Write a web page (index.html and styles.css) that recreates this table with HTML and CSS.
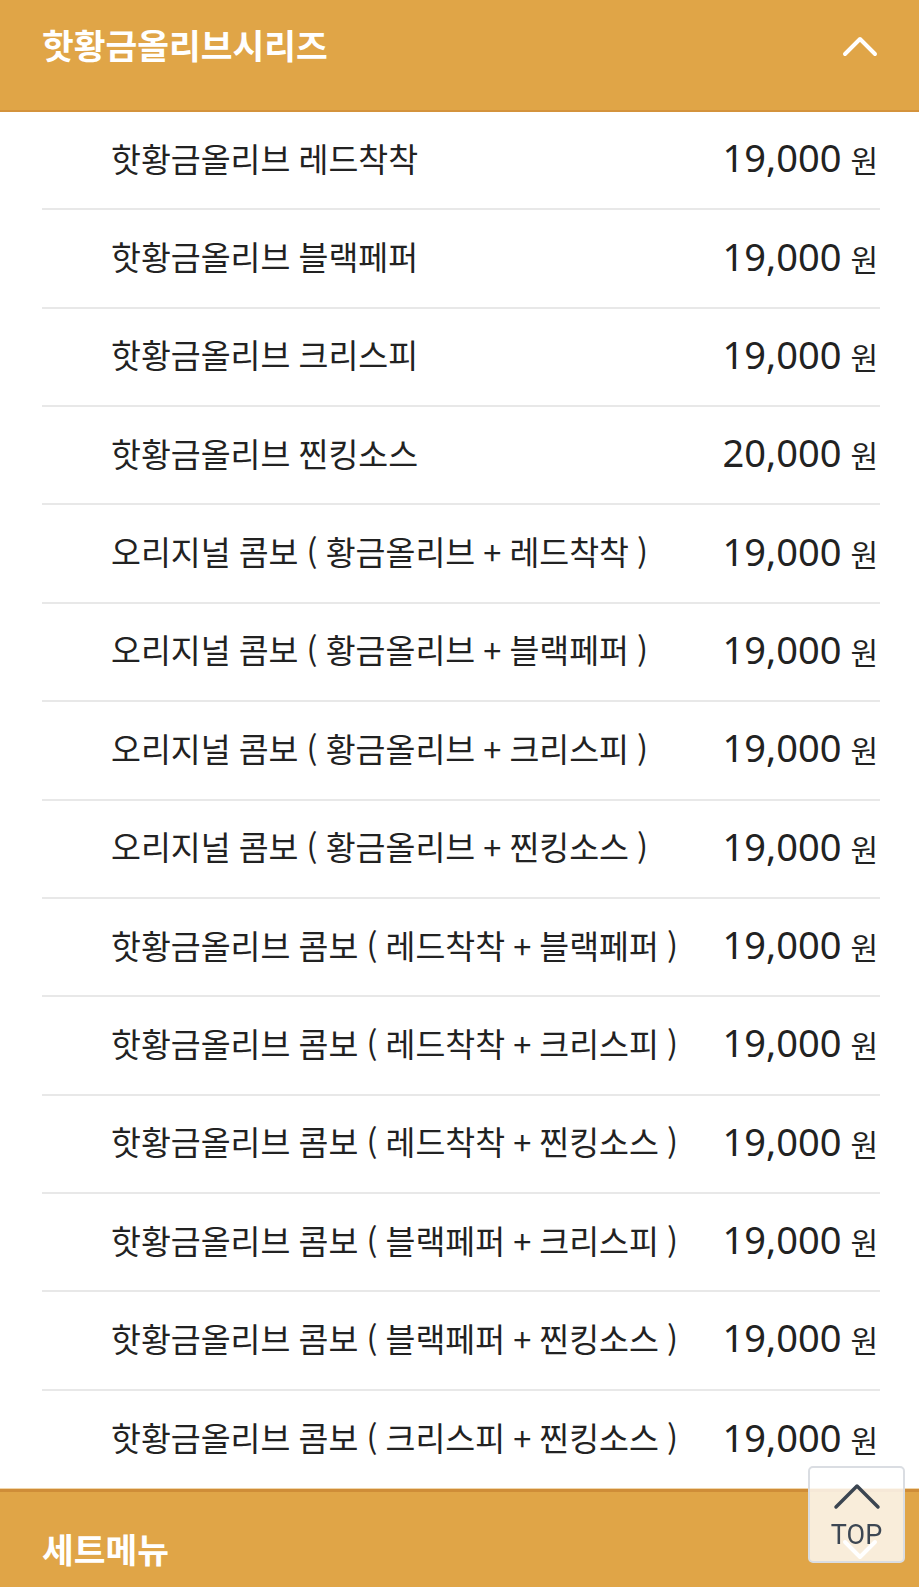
FILE: index.html
```html
<!DOCTYPE html>
<html lang="ko">
<head>
    <meta charset="UTF-8">
    <meta name="viewport" content="width=device-width, initial-scale=1.0">
    <title>메뉴</title>
    <link rel="stylesheet" href="styles.css">
</head>
<body>
    <div class="menu-section">
        <div class="section-head">
            <h2>핫황금올리브시리즈</h2>
            <svg class="chevron" width="38" height="24" viewBox="0 0 38 24"><polyline points="4,20 19,5 34,20"/></svg>
        </div>
        <ul class="menu-list">
            <li><span class="name">핫황금올리브 레드착착</span><span class="price"><span class="num">19,000</span><span class="unit">원</span></span></li>
            <li><span class="name">핫황금올리브 블랙페퍼</span><span class="price"><span class="num">19,000</span><span class="unit">원</span></span></li>
            <li><span class="name">핫황금올리브 크리스피</span><span class="price"><span class="num">19,000</span><span class="unit">원</span></span></li>
            <li><span class="name">핫황금올리브 찐킹소스</span><span class="price"><span class="num">20,000</span><span class="unit">원</span></span></li>
            <li><span class="name">오리지널 콤보 ( 황금올리브 + 레드착착 )</span><span class="price"><span class="num">19,000</span><span class="unit">원</span></span></li>
            <li><span class="name">오리지널 콤보 ( 황금올리브 + 블랙페퍼 )</span><span class="price"><span class="num">19,000</span><span class="unit">원</span></span></li>
            <li><span class="name">오리지널 콤보 ( 황금올리브 + 크리스피 )</span><span class="price"><span class="num">19,000</span><span class="unit">원</span></span></li>
            <li><span class="name">오리지널 콤보 ( 황금올리브 + 찐킹소스 )</span><span class="price"><span class="num">19,000</span><span class="unit">원</span></span></li>
            <li><span class="name">핫황금올리브 콤보 ( 레드착착 + 블랙페퍼 )</span><span class="price"><span class="num">19,000</span><span class="unit">원</span></span></li>
            <li><span class="name">핫황금올리브 콤보 ( 레드착착 + 크리스피 )</span><span class="price"><span class="num">19,000</span><span class="unit">원</span></span></li>
            <li><span class="name">핫황금올리브 콤보 ( 레드착착 + 찐킹소스 )</span><span class="price"><span class="num">19,000</span><span class="unit">원</span></span></li>
            <li><span class="name">핫황금올리브 콤보 ( 블랙페퍼 + 크리스피 )</span><span class="price"><span class="num">19,000</span><span class="unit">원</span></span></li>
            <li><span class="name">핫황금올리브 콤보 ( 블랙페퍼 + 찐킹소스 )</span><span class="price"><span class="num">19,000</span><span class="unit">원</span></span></li>
            <li><span class="name">핫황금올리브 콤보 ( 크리스피 + 찐킹소스 )</span><span class="price"><span class="num">19,000</span><span class="unit">원</span></span></li>
        </ul>
    </div>

    <div class="menu-section">
        <div class="section-head closed">
            <h2>세트메뉴</h2>
            <svg class="chevron" width="38" height="24" viewBox="0 0 38 24"><polyline points="4,4 19,19 34,4"/></svg>
        </div>
    </div>

    <a class="top-btn" href="#">
        <svg width="48" height="28" viewBox="0 0 48 28"><polyline points="3,24 24,3 45,24"/></svg>
        <span>TOP</span>
    </a>
</body>
</html>
```

FILE: styles.css
```css
body { margin: 0; font-family: "Noto Sans CJK KR", "Noto Sans", sans-serif; color: #222; background: #fff; }
ul { list-style: none; margin: 0; padding: 0; }

.section-head {
    display: flex;
    align-items: center;
    justify-content: space-between;
    box-sizing: border-box;
    height: 112px;
    padding: 0 40px 22px 42px;
    background: #e0a547;
    border-bottom: 2px solid #d4933c;
}
.section-head h2 { margin: 0; font-size: 34.5px; font-weight: bold; color: #fff; }
.chevron { margin-top: 3px; }
.chevron polyline { fill: none; stroke: #fff; stroke-width: 4; stroke-linecap: round; stroke-linejoin: round; }

.section-head.closed {
    height: 115px;
    padding: 0 40px 0 42px;
    border-bottom: none;
    border-top: 3px solid #cf8d38;
    box-shadow: 0 -1px 0 #f1d6aa;
}

.menu-list { margin: 0 39px 0 42px; }
.menu-list li {
    display: flex;
    align-items: center;
    justify-content: space-between;
    box-sizing: border-box;
    height: 98.36px;
    padding: 0 2px 6px 69px;
    border-bottom: 2px solid #e8e8e8;
}
.menu-list li:last-child { border-bottom: none; }
.name { font-size: 32.5px; font-weight: 400; color: #222; white-space: nowrap; word-spacing: -1px; }
.price { display: flex; align-items: baseline; white-space: nowrap; }
.price .num { font-family: "Noto Sans", Roboto, sans-serif; font-size: 38px; color: #222; }
.price .unit { font-size: 30px; margin-left: 9px; color: #222; }

.top-btn {
    position: fixed;
    right: 14px;
    bottom: 24px;
    width: 97px;
    height: 97px;
    box-sizing: border-box;
    display: flex;
    flex-direction: column;
    align-items: center;
    padding-top: 15px;
    background: rgba(255, 255, 255, 0.8);
    border: 2px solid #dadde2;
    border-radius: 5px;
    text-decoration: none;
}
.top-btn polyline { fill: none; stroke: #3b4551; stroke-width: 3.5; stroke-linecap: round; stroke-linejoin: round; }
.top-btn span { font-family: Roboto, "Liberation Sans", sans-serif; font-size: 27px; color: #3d4753; line-height: 1; margin-top: 11px; }
```
